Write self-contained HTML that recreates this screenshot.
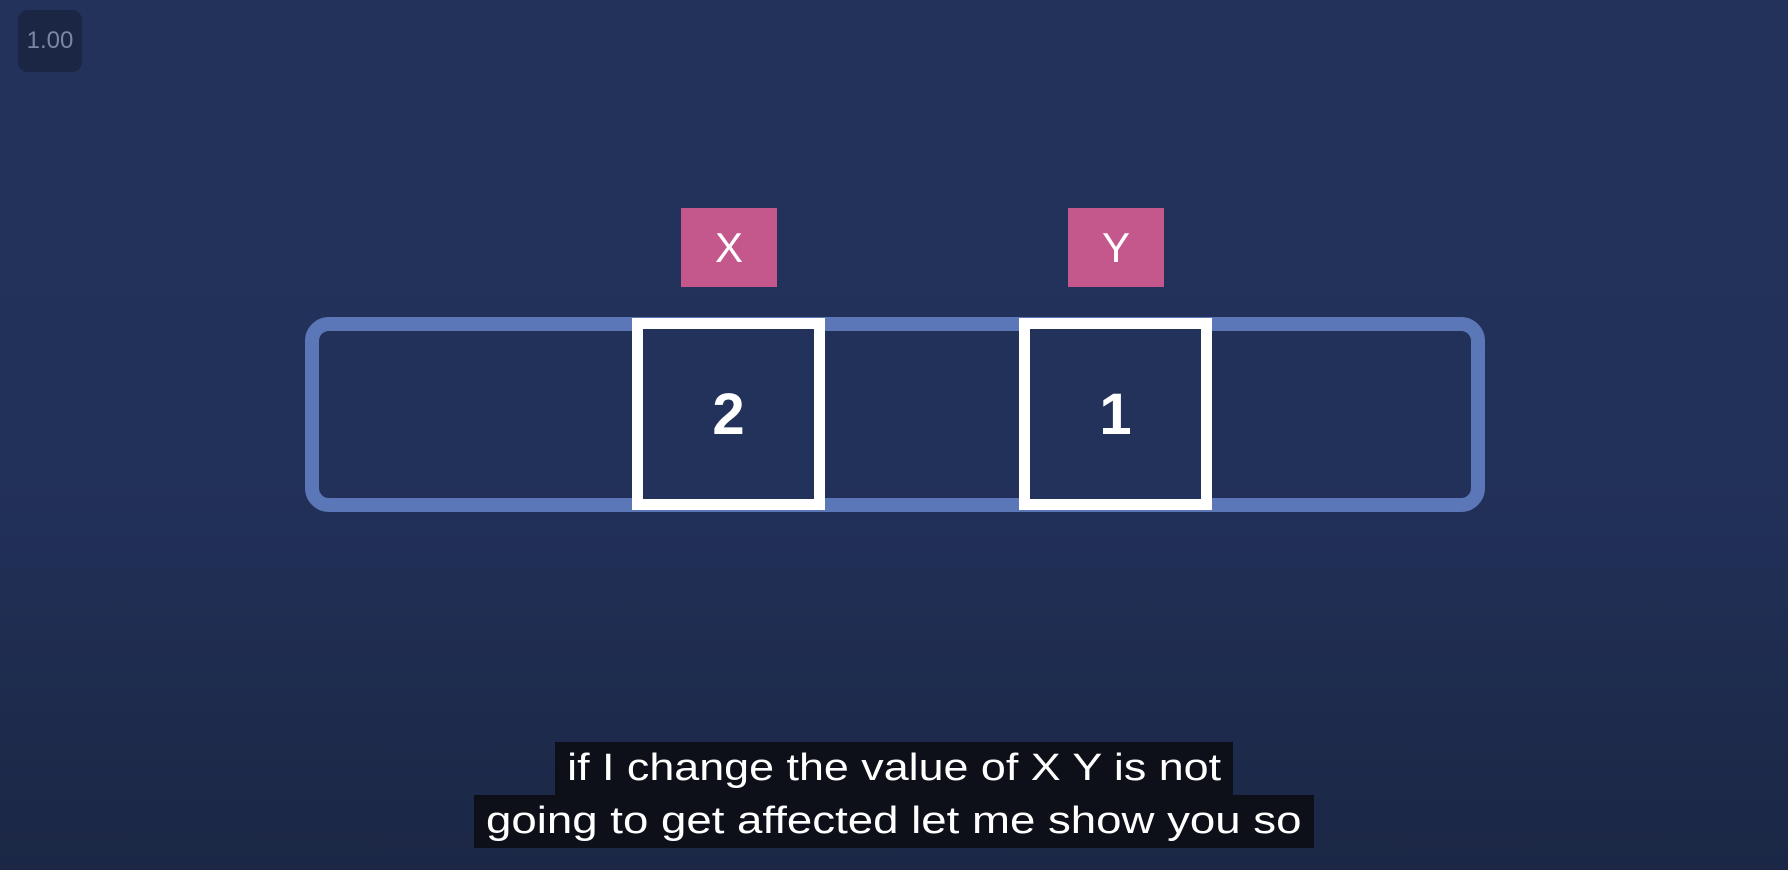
<!DOCTYPE html>
<html><head><meta charset="utf-8"><style>
html,body{margin:0;padding:0}
body{width:1788px;height:870px;position:relative;overflow:hidden;
background:linear-gradient(#22325a 0%,#22315a 55%,#1d2a4b 85%,#1b2745 100%);
font-family:"Liberation Sans",sans-serif}
.badge{position:absolute;left:18px;top:10px;width:64px;height:62px;border-radius:10px;background:#1b2644;
color:#7a86a3;font-size:24px;line-height:62px;text-align:center;font-weight:300}
.bar{position:absolute;left:305px;top:317px;width:1180px;height:195px;box-sizing:border-box;border:14px solid #5b77b8;border-radius:24px}
.cell{position:absolute;top:318px;width:193px;height:192px;box-sizing:border-box;border:11px solid #fff;background:#22325a;
color:#fff;font-weight:bold;font-size:58px;display:flex;align-items:center;justify-content:center}
.lab{position:absolute;top:208px;width:96px;height:79px;background:#c4578c;color:#fff;font-size:42px;display:flex;align-items:center;justify-content:center}
.sub{position:absolute;background:#0e1019;color:#fff;font-size:38px;height:53px;line-height:53px;box-sizing:border-box;white-space:nowrap;text-align:center}
.sub span{display:inline-block;transform:scaleX(1.18)}
</style></head><body>
<div class="badge">1.00</div>
<div class="bar"></div>
<div class="lab" style="left:681px">X</div>
<div class="lab" style="left:1068px">Y</div>
<div class="cell" style="left:632px">2</div>
<div class="cell" style="left:1019px">1</div>
<div class="sub" style="left:555px;top:742px;width:678px"><span>if I change the value of X Y is not</span></div>
<div class="sub" style="left:474px;top:795px;width:840px"><span style="transform:scaleX(1.2)">going to get affected let me show you so</span></div>
</body></html>
